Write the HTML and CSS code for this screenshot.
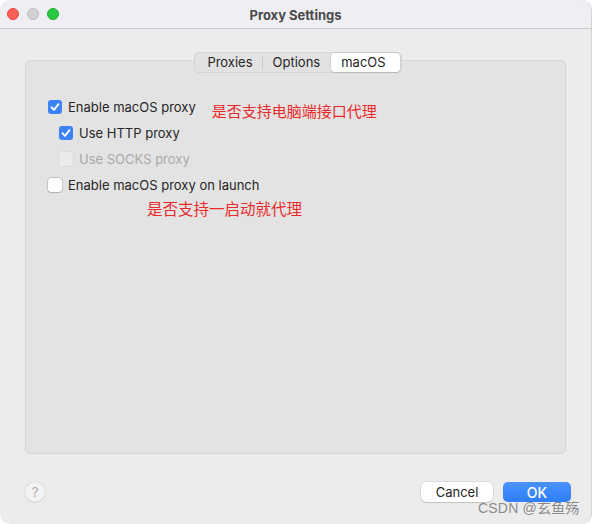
FILE: index.html
```html
<!DOCTYPE html>
<html>
<head>
<meta charset="utf-8">
<link rel="stylesheet" href="styles.css">
</head>
<body>
<div class="window">
  <div class="titlebar">
    <div class="lights">
      <span class="light red"></span>
      <span class="light gray"></span>
      <span class="light green"></span>
    </div>
    <div class="title">Proxy Settings</div>
    <div></div>
  </div>
  <div class="content">
    <div class="segwrap">
      <div class="seg">
        <span class="segitem">Proxies</span>
        <span class="segdiv"></span>
        <span class="segitem">Options</span>
        <span class="segitem active">macOS</span>
      </div>
    </div>
    <div class="panel">
      <div class="row">
        <span class="cb on"><svg viewBox="0 0 14 14" width="14" height="14"><path d="M3.6 7.3 L6 9.8 L10.5 4.2" fill="none" stroke="#fff" stroke-width="1.9" stroke-linecap="round" stroke-linejoin="round"/></svg></span>
        <span class="label">Enable macOS proxy</span>
        <span class="note n1">是否支持电脑端接口代理</span>
      </div>
      <div class="row sub">
        <span class="cb on"><svg viewBox="0 0 14 14" width="14" height="14"><path d="M3.6 7.3 L6 9.8 L10.5 4.2" fill="none" stroke="#fff" stroke-width="1.9" stroke-linecap="round" stroke-linejoin="round"/></svg></span>
        <span class="label">Use HTTP proxy</span>
      </div>
      <div class="row sub disabled">
        <span class="cb dis"></span>
        <span class="label">Use SOCKS proxy</span>
      </div>
      <div class="row">
        <span class="cb"></span>
        <span class="label">Enable macOS proxy on launch</span>
      </div>
      <div class="note n2">是否支持一启动就代理</div>
    </div>
    <div class="footer">
      <span class="help">?</span>
      <div class="buttons">
        <span class="btn cancel">Cancel</span>
        <span class="btn ok">OK</span>
      </div>
    </div>
  </div>
  <div class="watermark">CSDN @玄鱼殇</div>
</div>
</body>
</html>
```
FILE: styles.css
```css
* { box-sizing: border-box; }
html, body { margin: 0; padding: 0; background: #ffffff; }
body {
  font-family: Inter, "Liberation Sans", "Noto Sans CJK SC", sans-serif;
  font-size: 13px;
  color: #262626;
}
.window {
  position: relative;
  width: 592px;
  height: 524px;
  background: #ececec;
  border-radius: 10px;
  overflow: hidden;
  border-right: 1px solid #d4d4d4;
}
.titlebar {
  height: 29px;
  background: #efeff3;
  border-bottom: 1px solid #cdcdcf;
  display: grid;
  grid-template-columns: 1fr auto 1fr;
  align-items: center;
}
.lights {
  display: flex;
  gap: 8px;
  padding-left: 7px;
  align-items: center;
}
.light {
  width: 12px;
  height: 12px;
  border-radius: 50%;
  display: block;
}
.red { background: #fe5f57; border: 0.5px solid #e2463f; }
.gray { background: #d1d1d6; border: 0.5px solid #bdbdc2; }
.green { background: #28c840; border: 0.5px solid #1eae32; }
.title {
  font-weight: 700;
  font-size: 13px;
  color: #4a4a4a;
  padding-top: 1px;
}
.content {
  padding: 0 25px;
}
.segwrap {
  display: flex;
  justify-content: center;
  margin-top: 23px;
  margin-bottom: -13px;
  position: relative;
  z-index: 2;
  padding-left: 5px;
}
.seg {
  display: flex;
  align-items: center;
  height: 21px;
  background: #e2e2e2;
  border: 1px solid #d3d3d3;
  border-radius: 5px;
  padding: 0 1px;
}
.segitem {
  height: 19px;
  line-height: 19px;
  padding: 0 10px;
  color: #262626;
}
.segitem:first-child { padding: 0 9px 0 11px; }
.segdiv {
  width: 1px;
  height: 12px;
  background: #c7c7c7;
}
.segitem.active {
  background: #ffffff;
  border-radius: 4px;
  padding: 0 14px 0 10px;
  margin-left: 1px;
  box-shadow: 0 0 0 0.5px rgba(0,0,0,0.12), 0 1px 1px rgba(0,0,0,0.08);
}
.panel {
  height: 394px;
  background: #e3e3e3;
  border: 1px solid #d6d6d6;
  border-radius: 5px;
  padding: 33px 0 0 22px;
}
.row {
  display: flex;
  align-items: center;
  height: 26px;
}
.row.sub { padding-left: 11px; }
.cb {
  width: 14px;
  height: 14px;
  border-radius: 3px;
  background: #ffffff;
  box-shadow: 0 0 0 0.5px rgba(0,0,0,0.25), 0 0.5px 1px rgba(0,0,0,0.12);
  display: flex;
  flex: none;
}
.cb.on {
  background: #3b83f7;
  box-shadow: none;
}
.cb.dis {
  background: #ebebeb;
  box-shadow: 0 0 0 0.5px rgba(0,0,0,0.08);
}
.label {
  margin-left: 6px;
  color: #262626;
}
.disabled .label { color: #a9a9a9; }
.note {
  font-family: "Noto Sans CJK SC", sans-serif;
  color: #ea2a2a;
}
.n1 {
  margin-left: 16px;
  font-size: 15px;
  position: relative;
  top: 3px;
}
.n2 {
  margin-left: 99px;
  font-size: 15.5px;
  line-height: 22px;
  margin-top: -1px;
}
.footer {
  display: flex;
  align-items: center;
  justify-content: space-between;
  margin-top: 27px;
}
.help {
  width: 20px;
  height: 20px;
  border-radius: 50%;
  background: #f3f3f3;
  box-shadow: 0 0 0 0.5px rgba(0,0,0,0.1), 0 1px 1px rgba(0,0,0,0.06);
  color: #a8a8a8;
  font-size: 13px;
  display: flex;
  align-items: center;
  justify-content: center;
}
.buttons {
  display: flex;
  gap: 10px;
  margin-right: -5px;
  padding-top: 1px;
}
.btn {
  height: 20px;
  border-radius: 5px;
  display: flex;
  align-items: center;
  justify-content: center;
  font-size: 13px;
}
.cancel {
  width: 72px;
  background: #ffffff;
  color: #262626;
  box-shadow: 0 0 0 0.5px rgba(0,0,0,0.15), 0 1px 1px rgba(0,0,0,0.12);
}
.ok {
  width: 68px;
  background: linear-gradient(#4a93fd, #2f7ef7);
  color: #ffffff;
  font-weight: 500;
  font-size: 14px;
}
.watermark {
  position: absolute;
  left: 478px;
  top: 497px;
  font-family: "Liberation Sans", "Noto Sans CJK SC", sans-serif;
  font-size: 14px;
  color: rgba(120,120,120,0.85);
  letter-spacing: 0.2px;
}
```
